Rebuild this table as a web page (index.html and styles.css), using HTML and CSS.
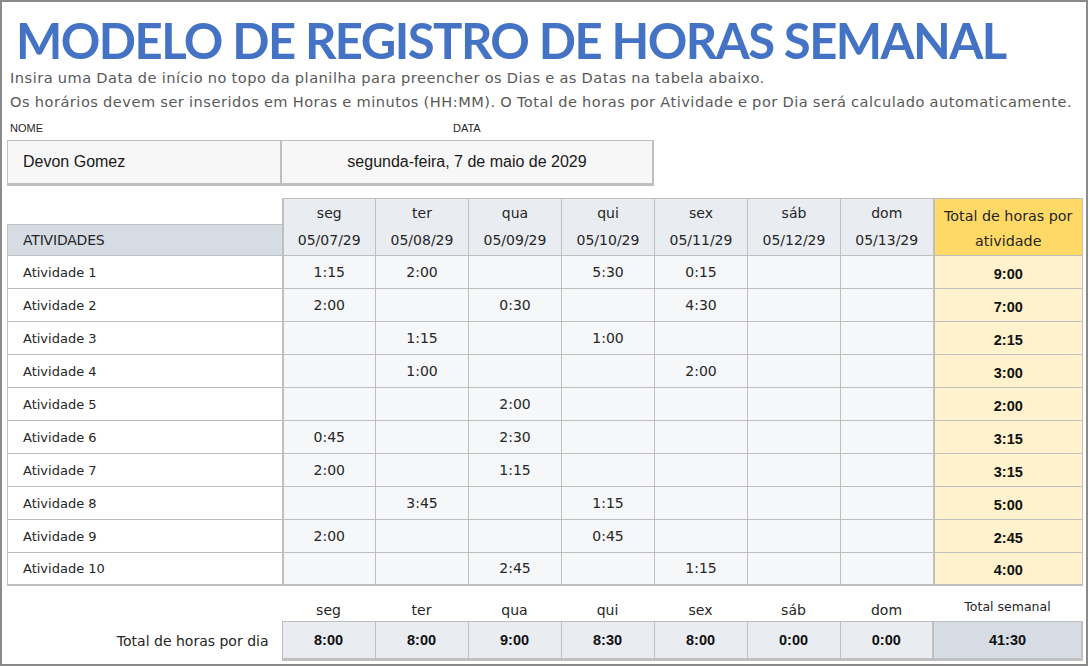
FILE: index.html
```html
<!DOCTYPE html>
<html lang="pt">
<head>
<meta charset="utf-8">
<title>Modelo de registro de horas semanal</title>
<link rel="stylesheet" href="styles.css">
</head>
<body>
<div class="frame">
  <h1 class="title">MODELO DE REGISTRO DE HORAS SEMANAL</h1>
  <p class="intro">Insira uma Data de início no topo da planilha para preencher os Dias e as Datas na tabela abaixo.<br>Os horários devem ser inseridos em Horas e minutos (HH:MM). O Total de horas por Atividade e por Dia será calculado automaticamente.</p>

  <div class="labels">
    <span class="lbl-name">NOME</span>
    <span class="lbl-date">DATA</span>
  </div>
  <div class="infobox">
    <div class="info-name">Devon Gomez</div>
    <div class="info-date">segunda-feira, 7 de maio de 2029</div>
  </div>

  <table class="grid">
    <colgroup>
      <col class="c-act"><col class="c-day"><col class="c-day"><col class="c-day"><col class="c-day"><col class="c-day"><col class="c-day"><col class="c-day"><col class="c-tot">
    </colgroup>
    <thead>
      <tr class="h1">
        <th class="blank"></th>
        <th class="day">seg</th><th class="day">ter</th><th class="day">qua</th><th class="day">qui</th><th class="day">sex</th><th class="day">sáb</th><th class="day">dom</th>
        <th class="tot-head" rowspan="2">Total de horas por atividade</th>
      </tr>
      <tr class="h2">
        <th class="act-head">ATIVIDADES</th>
        <th class="date">05/07/29</th><th class="date">05/08/29</th><th class="date">05/09/29</th><th class="date">05/10/29</th><th class="date">05/11/29</th><th class="date">05/12/29</th><th class="date">05/13/29</th>
      </tr>
    </thead>
    <tbody>
      <tr><td class="act">Atividade 1</td><td>1:15</td><td>2:00</td><td></td><td>5:30</td><td>0:15</td><td></td><td></td><td class="tot">9:00</td></tr>
      <tr><td class="act">Atividade 2</td><td>2:00</td><td></td><td>0:30</td><td></td><td>4:30</td><td></td><td></td><td class="tot">7:00</td></tr>
      <tr><td class="act">Atividade 3</td><td></td><td>1:15</td><td></td><td>1:00</td><td></td><td></td><td></td><td class="tot">2:15</td></tr>
      <tr><td class="act">Atividade 4</td><td></td><td>1:00</td><td></td><td></td><td>2:00</td><td></td><td></td><td class="tot">3:00</td></tr>
      <tr><td class="act">Atividade 5</td><td></td><td></td><td>2:00</td><td></td><td></td><td></td><td></td><td class="tot">2:00</td></tr>
      <tr><td class="act">Atividade 6</td><td>0:45</td><td></td><td>2:30</td><td></td><td></td><td></td><td></td><td class="tot">3:15</td></tr>
      <tr><td class="act">Atividade 7</td><td>2:00</td><td></td><td>1:15</td><td></td><td></td><td></td><td></td><td class="tot">3:15</td></tr>
      <tr><td class="act">Atividade 8</td><td></td><td>3:45</td><td></td><td>1:15</td><td></td><td></td><td></td><td class="tot">5:00</td></tr>
      <tr><td class="act">Atividade 9</td><td>2:00</td><td></td><td></td><td>0:45</td><td></td><td></td><td></td><td class="tot">2:45</td></tr>
      <tr class="last"><td class="act">Atividade 10</td><td></td><td></td><td>2:45</td><td></td><td>1:15</td><td></td><td></td><td class="tot">4:00</td></tr>
    </tbody>
  </table>

  <table class="summary">
    <colgroup>
      <col class="c-act"><col class="c-day"><col class="c-day"><col class="c-day"><col class="c-day"><col class="c-day"><col class="c-day"><col class="c-day"><col class="c-tot">
    </colgroup>
    <tr class="s-days">
      <td></td><td>seg</td><td>ter</td><td>qua</td><td>qui</td><td>sex</td><td>sáb</td><td>dom</td><td class="s-week">Total semanal</td>
    </tr>
    <tr class="s-vals">
      <td class="s-label">Total de horas por dia</td>
      <td class="v">8:00</td><td class="v">8:00</td><td class="v">9:00</td><td class="v">8:30</td><td class="v">8:00</td><td class="v">0:00</td><td class="v">0:00</td><td class="v total">41:30</td>
    </tr>
  </table>
</div>
</body>
</html>
```

FILE: styles.css
```css
* { box-sizing: border-box; }
html, body { margin: 0; padding: 0; background: #ffffff; }
body { font-family: "DejaVu Sans", "Liberation Sans", sans-serif; color: #262626; }

.frame {
  width: 1088px;
  height: 666px;
  border: 2px solid #8a8a8a;
  padding: 0 0 0 5px;
  overflow: hidden;
}

.title {
  margin: 0;
  padding: 12px 0 0 9px;
  font-family: "Lato", "DejaVu Sans", sans-serif;
  font-weight: 700;
  font-size: 49px;
  line-height: 52px;
  height: 64px;
  letter-spacing: -1.55px;
  color: #4472c4;
  white-space: nowrap;
}

.intro {
  margin: 0;
  padding-left: 3px;
  font-family: "DejaVu Sans", sans-serif;
  font-size: 14.6px;
  line-height: 24px;
  color: #595959;
  letter-spacing: 0.5px;
  word-spacing: -0.5px;
  white-space: nowrap;
}

.labels {
  display: flex;
  height: 19px;
  margin-top: 7px;
  font-family: "Liberation Sans", Arial, sans-serif;
  font-size: 11px;
  line-height: 14px;
  color: #262626;
}
.lbl-name { width: 446px; padding-left: 3px; }

.infobox {
  display: flex;
  width: 647px;
  height: 46px;
  background: #f7f7f7;
  border: 1px solid #bfbfbf;
  border-right-width: 2px;
  border-bottom-width: 3px;
  font-family: "Liberation Sans", Arial, sans-serif;
  font-size: 16px;
  color: #1a1a1a;
}
.info-name {
  width: 274px;
  padding-left: 15px;
  display: flex;
  align-items: center;
  border-right: 2px solid #bfbfbf;
}
.info-date {
  flex: 1;
  display: flex;
  align-items: center;
  justify-content: center;
  padding-bottom: 1px;
}

.grid, .summary {
  border-collapse: collapse;
  table-layout: fixed;
  width: 1075px;
  font-family: "DejaVu Sans", sans-serif;
}
.grid { margin-top: 12px; }
.c-act { width: 275px; }
.c-day { width: 93px; }
.c-tot { width: 149px; }

.grid th, .grid td {
  padding: 0;
  border: 1px solid #bfbfbf;
  text-align: center;
  font-weight: 400;
  font-size: 14px;
  color: #262626;
}
.grid .h1 th { height: 26px; vertical-align: middle; padding-top: 3px; }
.grid .h2 th { height: 31px; }
.grid .blank { border: none; border-right: 2px solid #bfbfbf; border-bottom: 1px solid #bfbfbf; background: #ffffff; }
.grid .day, .grid .date { background: #e9ecf1; }
.grid .day { border-bottom: none; }
.grid .date { border-top: none; }
.grid .act-head {
  background: #d6dce4;
  text-align: left;
  padding-left: 15px;
  font-size: 14px;
  border-right: 2px solid #bfbfbf;
  letter-spacing: -0.2px;
}
.grid .tot-head {
  background: #ffd966;
  border-left: 2px solid #bfbfbf;
  line-height: 25px;
  font-size: 14.3px;
  padding: 2px 4px 0;
}

.grid tbody td { height: 33px; background: #f6f7f9; }
.grid tbody td.act {
  background: #ffffff;
  text-align: left;
  padding-left: 15px;
  font-size: 13px;
  border-right: 2px solid #bfbfbf;
}
.grid tbody td.tot {
  background: #fff2cc;
  border-left: 2px solid #bfbfbf;
  font-family: "Liberation Sans", Arial, sans-serif;
  font-weight: 700;
  font-size: 14.5px;
  color: #111111;
  padding-top: 3px;
}
.grid tbody tr.last td { height: 32px; border-bottom: 2px solid #bfbfbf; }

.summary { margin-top: 12px; }
.summary td { padding: 0; text-align: center; }
.summary .s-days td { height: 24px; font-size: 14px; color: #262626; vertical-align: middle; padding-top: 2px; }
.summary .s-days td.s-week { font-size: 12.5px; vertical-align: top; padding-top: 1px; }
.summary .s-vals td { height: 38px; }
.summary .s-label {
  text-align: right;
  padding-right: 13px;
  font-size: 14px;
  color: #262626;
}
.summary .v {
  background: #e9ecf1;
  border: 1px solid #bfbfbf;
  border-bottom-width: 3px;
  font-family: "Liberation Sans", Arial, sans-serif;
  font-weight: 700;
  font-size: 14.5px;
  color: #111111;
}
.summary .v.total {
  background: #d6dce4;
  border-left: 2px solid #bfbfbf;
  border-right-width: 2px;
}
```
